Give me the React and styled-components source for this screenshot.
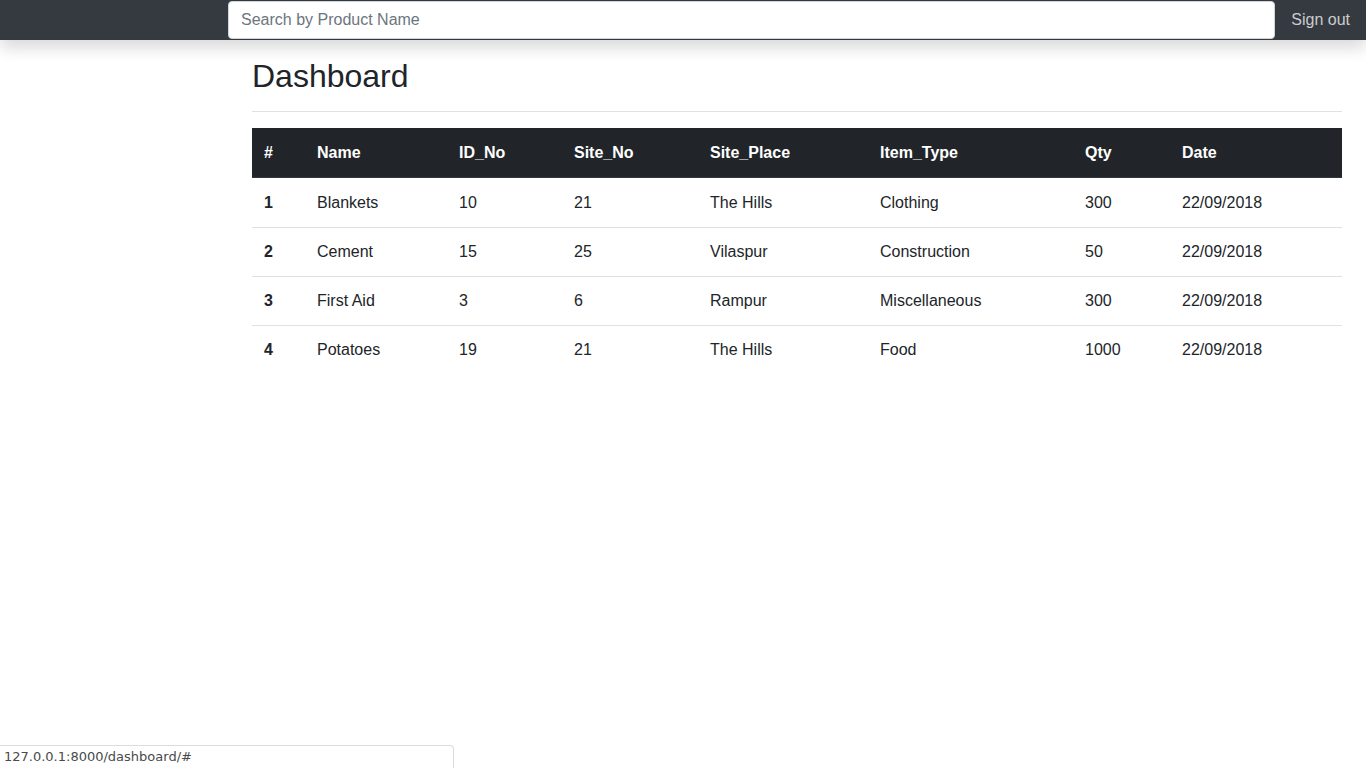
import React from "react";
import styled, { createGlobalStyle } from "styled-components";

const GlobalStyle = createGlobalStyle`
  * { box-sizing: border-box; }
  body {
    margin: 0;
    font-family: "Liberation Sans", Arial, sans-serif;
    font-size: 16px;
    line-height: 1.5;
    color: #212529;
    background: #fff;
  }
`;

const Navbar = styled.nav`
  height: 40px;
  background: #343a40;
  display: flex;
  align-items: center;
  box-shadow: 0 0.5rem 1rem rgba(0, 0, 0, 0.15);
  position: relative;
  z-index: 2;
`;

const Brand = styled.div`
  width: 228px;
  flex-shrink: 0;
`;

const Search = styled.input`
  flex: 1;
  height: 38px;
  margin: 1px 0;
  padding: 0 12px;
  border: 1px solid #ced4da;
  border-radius: 4px;
  font-family: inherit;
  font-size: 16px;
  color: #495057;
  background: #fff;
  outline: none;
  &::placeholder { color: #6c757d; }
`;

const NavLink = styled.a`
  padding: 0 16px;
  color: rgba(255, 255, 255, 0.75);
  text-decoration: none;
  font-size: 16px;
  white-space: nowrap;
`;

const Main = styled.main`
  padding: 0 24px 0 252px;
`;

const Header = styled.div`
  padding: 17px 0 16px;
  margin-bottom: 16px;
  border-bottom: 1px solid #dee2e6;
`;

const Title = styled.h2`
  margin: 0;
  font-size: 32px;
  font-weight: 500;
  line-height: 38px;
`;

const Table = styled.table`
  width: 100%;
  border-collapse: collapse;
  table-layout: fixed;
`;

const Th = styled.th`
  background: #212529;
  color: #fff;
  text-align: left;
  font-weight: 700;
  padding: 12px;
  height: 50px;
  box-shadow: inset 0 -1px 0 #32383e;
  width: ${(p) => p.$w}px;
`;

const Td = styled.td`
  padding: 12px;
  height: 49px;
  border-top: 1px solid #dee2e6;
  font-weight: ${(p) => (p.$bold ? 700 : 400)};
`;

const FirstRow = styled.tr`
  & > td {
    border-top: none;
    padding-top: 13px;
    padding-bottom: 11px;
  }
`;

const StatusBubble = styled.div`
  position: fixed;
  left: 0;
  bottom: 0;
  width: 454px;
  height: 23px;
  padding: 0 4px;
  background: #fff;
  border: 1px solid #dcdcdc;
  border-left: none;
  border-bottom: none;
  border-top-right-radius: 4px;
  font-family: "DejaVu Sans", "Noto Sans", sans-serif;
  font-size: 13px;
  line-height: 22px;
  color: #4a4a4a;
`;

const columns = [
  ["#", 53],
  ["Name", 142],
  ["ID_No", 115],
  ["Site_No", 136],
  ["Site_Place", 170],
  ["Item_Type", 205],
  ["Qty", 97],
  ["Date", 172],
];

const rows = [
  ["1", "Blankets", "10", "21", "The Hills", "Clothing", "300", "22/09/2018"],
  ["2", "Cement", "15", "25", "Vilaspur", "Construction", "50", "22/09/2018"],
  ["3", "First Aid", "3", "6", "Rampur", "Miscellaneous", "300", "22/09/2018"],
  ["4", "Potatoes", "19", "21", "The Hills", "Food", "1000", "22/09/2018"],
];

export default function App() {
  return (
    <>
      <GlobalStyle />
      <Navbar>
        <Brand />
        <Search placeholder="Search by Product Name" />
        <NavLink href="#">Sign out</NavLink>
      </Navbar>
      <Main>
        <Header>
          <Title>Dashboard</Title>
        </Header>
        <Table>
          <thead>
            <tr>
              {columns.map(([c, w]) => (
                <Th key={c} $w={w}>{c}</Th>
              ))}
            </tr>
          </thead>
          <tbody>
            {rows.map((r, i) => {
              const Row = i === 0 ? FirstRow : "tr";
              return (
                <Row key={r[0]}>
                  {r.map((v, j) => (
                    <Td key={j} $bold={j === 0}>{v}</Td>
                  ))}
                </Row>
              );
            })}
          </tbody>
        </Table>
      </Main>
      <StatusBubble>127.0.0.1:8000/dashboard/#</StatusBubble>
    </>
  );
}
